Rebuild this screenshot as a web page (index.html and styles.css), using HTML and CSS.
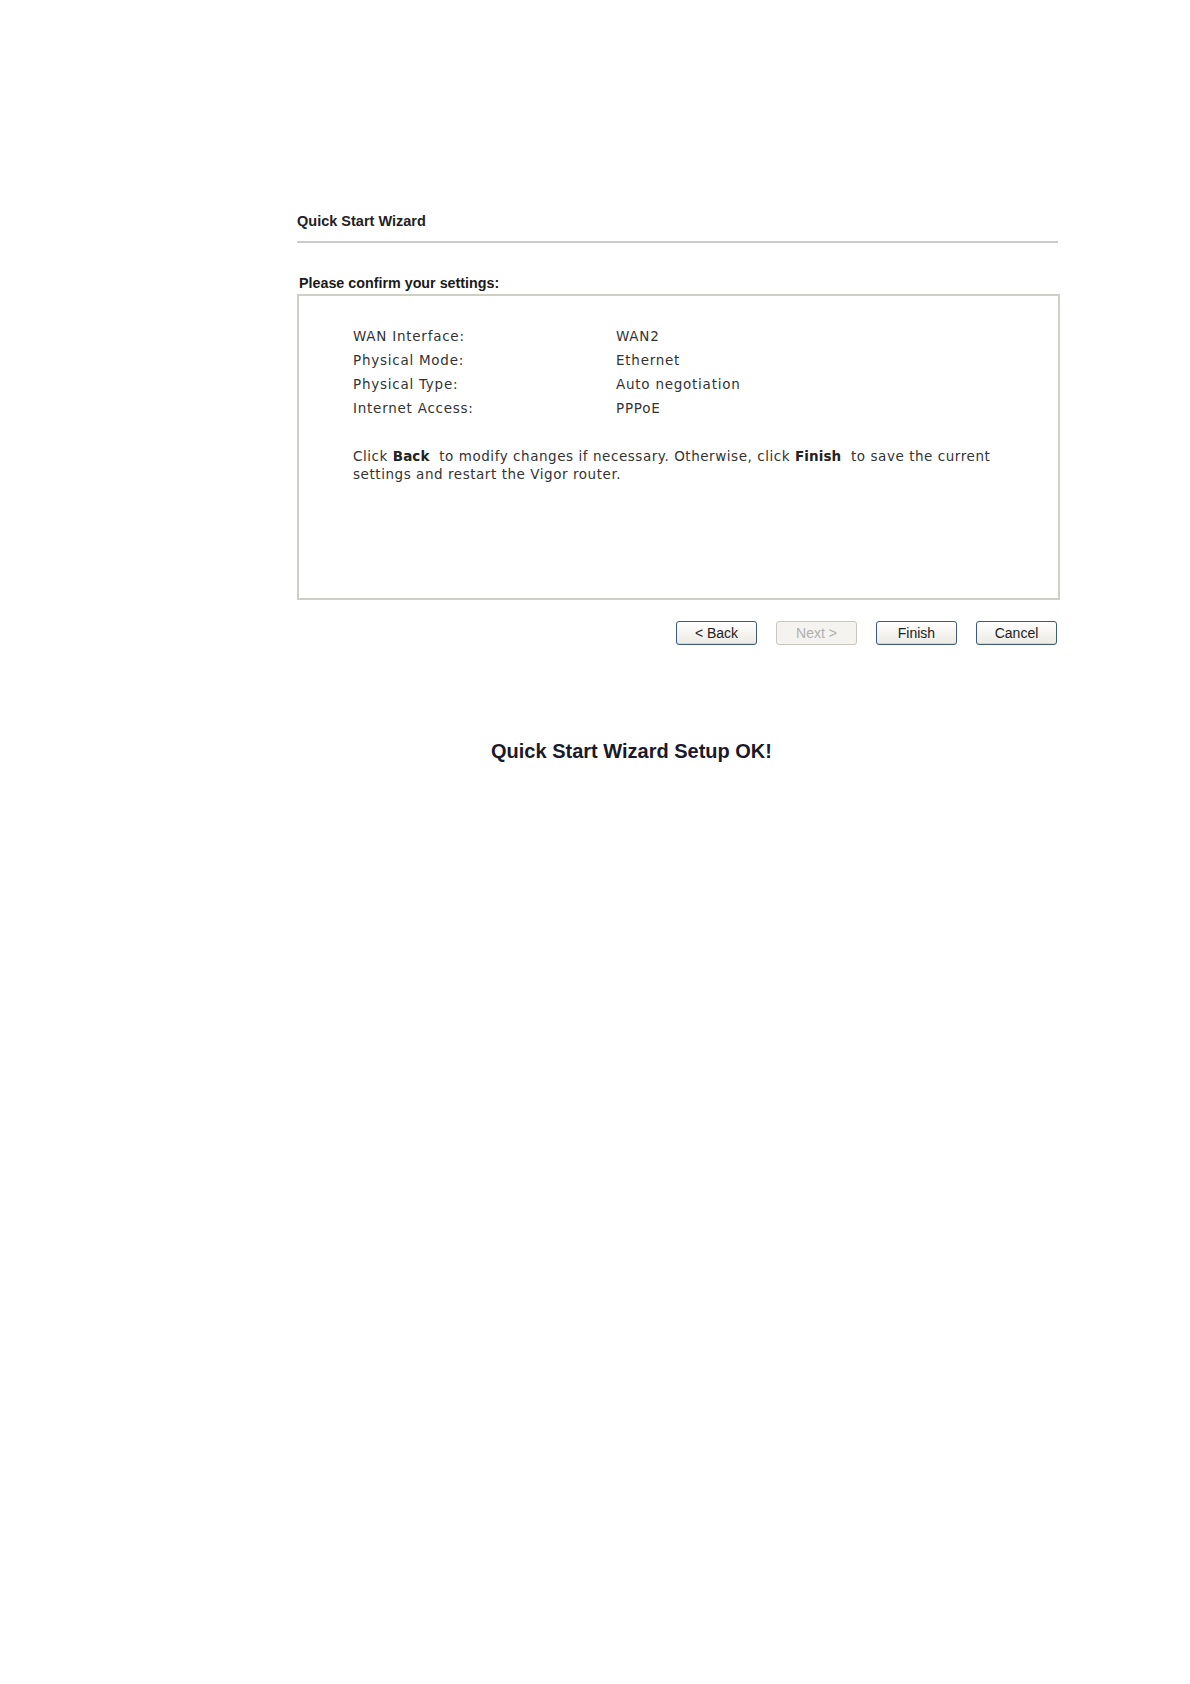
FILE: index.html
```html
<!DOCTYPE html>
<html>
<head>
<meta charset="utf-8">
<link rel="stylesheet" href="styles.css">
</head>
<body>
<div class="page">
  <div class="wizard">
    <div class="title">Quick Start Wizard</div>
    <div class="rule"></div>
    <div class="confirm">Please confirm your settings:</div>
    <div class="box">
      <div class="rows">
        <div class="row"><span class="label">WAN Interface:</span><span class="value">WAN2</span></div>
        <div class="row"><span class="label">Physical Mode:</span><span class="value">Ethernet</span></div>
        <div class="row"><span class="label">Physical Type:</span><span class="value">Auto negotiation</span></div>
        <div class="row"><span class="label">Internet Access:</span><span class="value">PPPoE</span></div>
      </div>
      <p class="note">Click <b>Back</b>&nbsp; to modify changes if necessary. Otherwise, click <b>Finish</b>&nbsp; to save the current settings and restart the Vigor router.</p>
    </div>
    <div class="buttons">
      <button class="btn">&lt; Back</button>
      <button class="btn disabled">Next &gt;</button>
      <button class="btn">Finish</button>
      <button class="btn">Cancel</button>
    </div>
  </div>
  <div class="done">Quick Start Wizard Setup OK!</div>
</div>
</body>
</html>
```

FILE: styles.css
```css
html, body {
  margin: 0;
  padding: 0;
  background: #ffffff;
}
.page {
  width: 1190px;
  height: 1684px;
  padding-top: 212px;
  box-sizing: border-box;
}
.wizard {
  margin-left: 297px;
  width: 763px;
}
.title {
  font-family: "Liberation Sans", Arial, sans-serif;
  font-weight: bold;
  font-size: 14.5px;
  line-height: 18px;
  color: #222222;
  height: 18px;
}
.rule {
  margin-top: 11px;
  height: 2px;
  width: 761px;
  background: #cccccc;
}
.confirm {
  margin-top: 32px;
  padding-left: 2px;
  font-family: "Liberation Sans", Arial, sans-serif;
  font-weight: bold;
  font-size: 14.3px;
  line-height: 17px;
  color: #1a1a1a;
}
.box {
  margin-top: 2px;
  width: 763px;
  height: 306px;
  box-sizing: border-box;
  border: 2px solid #cfcfc6;
  padding: 28px 0 0 54px;
}
.rows {
  display: flex;
  flex-direction: column;
}
.row {
  display: flex;
  font-family: "DejaVu Sans", Verdana, sans-serif;
  font-size: 13.5px;
  letter-spacing: 0.75px;
  line-height: 24px;
  color: #333333;
}
.label {
  width: 263px;
}
.note {
  margin: 27px 0 0 0;
  width: 660px;
  font-family: "DejaVu Sans", Verdana, sans-serif;
  font-size: 13.5px;
  letter-spacing: 0.55px;
  line-height: 18px;
  color: #333333;
}
.note b {
  font-weight: bold;
  letter-spacing: 0.1px;
  color: #222222;
}
.buttons {
  display: flex;
  justify-content: flex-end;
  gap: 19px;
  margin-top: 21px;
  width: 760px;
}
.btn {
  width: 81px;
  height: 24px;
  padding: 0;
  box-sizing: border-box;
  border: 1px solid #3d5a7a;
  border-radius: 3px;
  background: linear-gradient(#ffffff, #eceae2);
  font-family: "Liberation Sans", Arial, sans-serif;
  font-size: 14px;
  color: #222222;
  box-shadow: inset 0 -1px 0 #d8d6cc;
}
.btn.disabled {
  border-color: #c9c7bf;
  color: #b0b0b0;
  background: #f4f3ef;
  box-shadow: none;
}
.done {
  margin-top: 94px;
  margin-left: 491px;
  font-family: "Liberation Sans", Arial, sans-serif;
  font-weight: bold;
  font-size: 20px;
  line-height: 24px;
  color: #1a1a2a;
}
```
